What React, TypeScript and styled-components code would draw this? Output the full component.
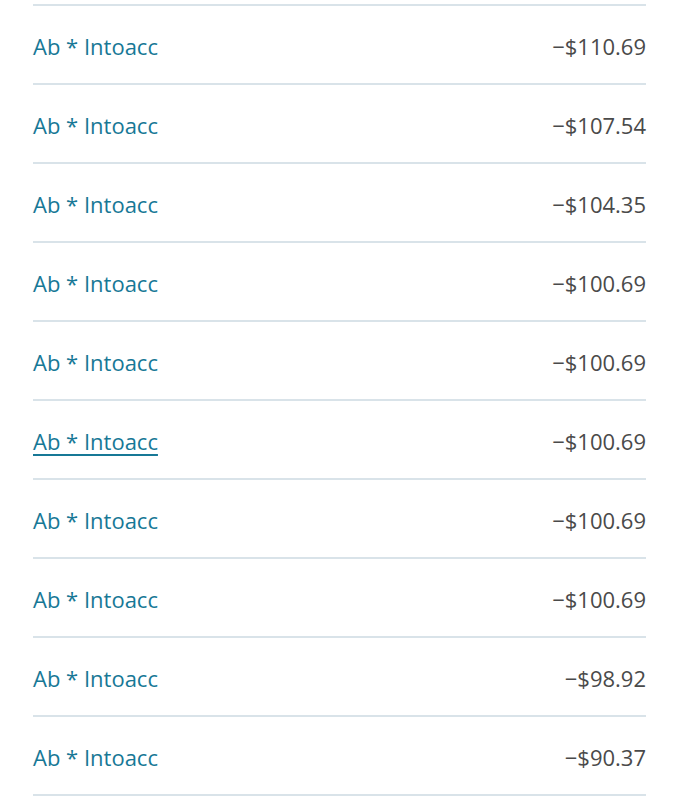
import React from "react";
import styled, { createGlobalStyle } from "styled-components";

const Global = createGlobalStyle`
  html, body { margin: 0; padding: 0; background: #ffffff; }
  body { font-family: "Open Sans", "Noto Sans", sans-serif; }
`;

const Page = styled.div`
  padding: 4px 32px 0 33px;
`;

const List = styled.ul`
  list-style: none;
  margin: 0;
  padding: 0;
  border-top: 2px solid #d9e3e9;
`;

const Row = styled.li`
  box-sizing: border-box;
  display: flex;
  align-items: center;
  justify-content: space-between;
  height: 79px;
  padding-top: 3px;
  border-bottom: 2px solid #d9e3e9;
`;

const Merchant = styled.a<{ $hover?: boolean }>`
  color: #177896;
  font-size: 22px;
  text-decoration: ${(p) => (p.$hover ? "underline" : "none")};
  text-underline-offset: 4px;
  text-decoration-thickness: 2px;
  cursor: pointer;
`;

const Amount = styled.span`
  color: #4a4a4a;
  font-size: 22px;
`;

const rows = [
  "110.69",
  "107.54",
  "104.35",
  "100.69",
  "100.69",
  "100.69",
  "100.69",
  "100.69",
  "98.92",
  "90.37",
];

export default function App() {
  return (
    <>
      <Global />
      <Page>
        <List>
          {rows.map((a, i) => (
            <Row key={i}>
              <Merchant $hover={i === 5}>Ab * Intoacc</Merchant>
              <Amount>−${a}</Amount>
            </Row>
          ))}
        </List>
      </Page>
    </>
  );
}
